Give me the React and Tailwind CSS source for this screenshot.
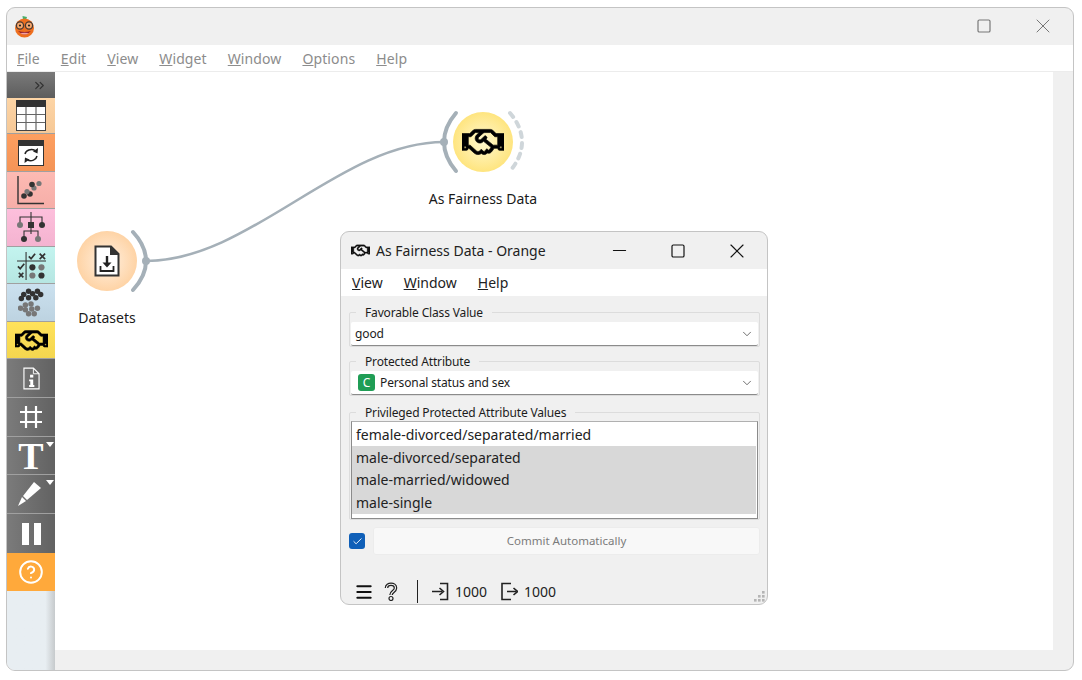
import { ChevronDown, ChevronsRight, Check, CircleHelp, Menu, Minus, Square, X } from "lucide-react";
import { FaRegHandshake } from "react-icons/fa";

const font = { fontFamily: '"Noto Sans", "Open Sans", sans-serif' };

function Logo() {
  return (
    <svg width="24" height="24" viewBox="0 0 24 24">
      <path d="M10.5 2 L15 3 L14 6 L11 6 Z" fill="#46b06a" />
      <circle cx="12.5" cy="14" r="9.5" fill="#ee6f1f" />
      <path d="M6 17 Q12.5 24 19 17 Q12.5 19 6 17 Z" fill="#8f1d2a" />
      <path d="M8 19 Q12.5 22 17 19 Q12.5 18.5 8 19 Z" fill="#f4a0a0" />
      <circle cx="8" cy="11.5" r="3.6" fill="#f6a66a" stroke="#4a3a32" strokeWidth="1.3" />
      <circle cx="17" cy="11.5" r="3.6" fill="#f6a66a" stroke="#4a3a32" strokeWidth="1.3" />
      <circle cx="8" cy="11.5" r="1.1" fill="#222" />
      <circle cx="17" cy="11.5" r="1.1" fill="#222" />
    </svg>
  );
}

function TableIcon() {
  return (
    <svg width="30" height="31" viewBox="0 0 30 31">
      <rect x="0.5" y="0.5" width="29" height="30" fill="#fff" stroke="#444" />
      <rect x="0" y="0" width="30" height="7" fill="#333" />
      <path d="M10 7V30M20 7V30M1 14.5H29M1 22.5H29" stroke="#666" strokeWidth="1.2" />
    </svg>
  );
}

function ReloadIcon() {
  return (
    <svg width="26" height="26" viewBox="0 0 26 26">
      <rect x="0.5" y="0.5" width="25" height="25" fill="#fff" stroke="#333" />
      <rect x="0" y="0" width="26" height="6" fill="#333" />
      <path d="M7 14 A6.5 5.5 0 0 1 17 10.5" fill="none" stroke="#222" strokeWidth="1.5" />
      <path d="M20 8 L19.5 13.5 L15 11.5 Z" fill="#222" />
      <path d="M19 16 A6.5 5.5 0 0 1 9.5 20" fill="none" stroke="#222" strokeWidth="1.5" />
      <path d="M6.5 23 L7 17.5 L11.5 19.5 Z" fill="#222" />
    </svg>
  );
}

function ScatterIcon() {
  return (
    <svg width="28" height="29" viewBox="0 0 28 29">
      <path d="M1 0V27.5H27" fill="none" stroke="#333" strokeWidth="1.4" />
      <circle cx="7" cy="20" r="2.8" fill="#333" />
      <circle cx="13" cy="18" r="2.8" fill="#333" />
      <circle cx="10" cy="15.5" r="2.6" fill="#777" />
      <circle cx="17" cy="12" r="2.6" fill="#777" />
      <circle cx="15" cy="8.5" r="2.8" fill="#333" />
      <circle cx="22" cy="7.5" r="2.6" fill="#777" />
    </svg>
  );
}

function TreeIcon() {
  return (
    <svg width="30" height="31" viewBox="0 0 30 31">
      <path d="M15 0V13M4 13V5H26V13M15 13V22M8 26V19H22V26" fill="none" stroke="#333" strokeWidth="1.1" />
      <circle cx="4" cy="13" r="3" fill="#777" />
      <rect x="12" y="10" width="6" height="6" fill="#333" />
      <circle cx="26" cy="13" r="3" fill="#333" />
      <circle cx="8" cy="27" r="3" fill="#333" />
      <circle cx="22" cy="27" r="3" fill="#777" />
    </svg>
  );
}

function TestIcon() {
  return (
    <svg width="29" height="29" viewBox="0 0 32 32">
      <path d="M10 1V32M0 11H32" stroke="#333" strokeWidth="1.2" />
      <path d="M13 6L15.5 8.5L20 3M1 17L3.5 19.5L8 14" fill="none" stroke="#333" strokeWidth="1.9" />
      <path d="M25 3L31 9M31 3L25 9M2 24L7 29M7 24L2 29" stroke="#333" strokeWidth="1.9" />
      <circle cx="17" cy="18" r="3.4" fill="#333" />
      <circle cx="27" cy="18" r="3.4" fill="#777" />
      <circle cx="17" cy="27" r="3.4" fill="#777" />
      <circle cx="27" cy="27" r="3.4" fill="#333" />
    </svg>
  );
}

function ClusterIcon() {
  const dark = [[13, 4], [18, 7], [7, 8], [24, 4], [13, 12], [28, 8], [22, 12], [4, 13]];
  const gray = [[3, 25], [9, 21], [16, 20], [24, 25], [9, 27], [17, 26], [13, 32], [20, 32]];
  return (
    <svg width="26" height="29" viewBox="0 0 32 36">
      {gray.map(([x, y], i) => <circle key={i} cx={x} cy={y} r="3.4" fill="#777" />)}
      {dark.map(([x, y], i) => <circle key={i} cx={x} cy={y} r="3.4" fill="#333" />)}
    </svg>
  );
}

function InfoIcon() {
  return (
    <svg width="17" height="23" viewBox="0 0 18 24">
      <path d="M1 1H11L17 7V23H1Z" fill="none" stroke="#fff" strokeWidth="1.2" />
      <path d="M11 1V7H17" fill="none" stroke="#fff" strokeWidth="1" />
      <rect x="7.5" y="8" width="3.4" height="3" fill="#fff" />
      <path d="M6.5 13H10.8V19H12V21H6.5V19H7.7V15H6.5Z" fill="#fff" />
    </svg>
  );
}

function HashIcon() {
  return (
    <svg width="24" height="24" viewBox="0 0 24 24">
      <path d="M7 1V23M17 1V23M1 7H23M1 17H23" stroke="#fff" strokeWidth="2.2" />
    </svg>
  );
}

function PenIcon() {
  return (
    <svg width="24" height="26" viewBox="0 0 24 26">
      <path d="M16 1L23 7L9 19L5 15Z" fill="#fff" />
      <path d="M4 16L8 20L0 25Z" fill="#fff" />
    </svg>
  );
}

function HelpOutlineIcon() {
  const d = "M2.5 6 C2.5 1 11.5 1 11.5 6 C11.5 9.5 7 9.5 7 13";
  return (
    <svg width="14" height="19" viewBox="0 0 14 19">
      <path d={d} fill="none" stroke="#222" strokeWidth="3.6" />
      <path d={d} fill="none" stroke="#f0f0f0" strokeWidth="1.2" />
      <circle cx="7" cy="16.5" r="2" fill="none" stroke="#222" strokeWidth="1.2" />
    </svg>
  );
}

function InputIcon() {
  return (
    <svg width="17" height="19" viewBox="0 0 17 19" className="shrink-0">
      <path d="M8 1.5H15.5V17.5H8" fill="none" stroke="#222" strokeWidth="1.6" />
      <path d="M0 9.5H10" stroke="#222" strokeWidth="1.6" />
      <path d="M7.5 6L11.5 9.5L7.5 13" fill="none" stroke="#222" strokeWidth="1.6" />
    </svg>
  );
}

function OutputIcon() {
  return (
    <svg width="17" height="19" viewBox="0 0 17 19" className="shrink-0">
      <path d="M10 1.5H1V17.5H10" fill="none" stroke="#222" strokeWidth="1.6" />
      <path d="M6 9.5H15.5" stroke="#222" strokeWidth="1.6" />
      <path d="M12.5 6L16.5 9.5L12.5 13" fill="none" stroke="#222" strokeWidth="1.6" />
    </svg>
  );
}

function Corner() {
  return <div className="absolute right-[1px] top-[5px] w-0 h-0 border-l-[4px] border-r-[4px] border-t-[5px] border-l-transparent border-r-transparent border-t-white" />;
}

function Tool({ color, height = "h-[38px]", children }) {
  return (
    <div className={`relative ${height} flex items-center justify-center border-b border-[#a0a0a0] ${color}`}>
      {children}
    </div>
  );
}

const grayRow = "bg-linear-to-r from-[#7b7b7b] to-[#626262]";

function Sidebar() {
  return (
    <div className="w-[48px] shrink-0 flex flex-col bg-linear-to-r from-[#e8eef2] from-80% to-[#c6cacc]">
      <div className="h-[26px] flex items-center justify-end pr-[8px] bg-linear-to-b from-[#7a7a7a] to-[#5d5d5d]">
        <ChevronsRight size={15} strokeWidth={2} className="text-[#333]" />
      </div>
      <Tool height="h-[36px]" color="bg-linear-to-b from-[#fdd5a6] to-[#f6c896]"><TableIcon /></Tool>
      <Tool color="bg-linear-to-b from-[#fd9f60] to-[#f49457]"><ReloadIcon /></Tool>
      <Tool height="h-[37px]" color="bg-linear-to-b from-[#fdbab3] to-[#f6aea8]"><ScatterIcon /></Tool>
      <Tool color="bg-linear-to-b from-[#fdbfdc] to-[#f4b3d0]"><TreeIcon /></Tool>
      <Tool height="h-[37px]" color="bg-linear-to-b from-[#c3f4ef] to-[#b6e6e2]"><TestIcon /></Tool>
      <Tool color="bg-linear-to-b from-[#cbe1ef] to-[#bdd3e1]"><ClusterIcon /></Tool>
      <Tool height="h-[37px]" color="bg-linear-to-b from-[#ffe25a] to-[#f4d64f]">
        <FaRegHandshake size={33} stroke="#000" strokeWidth={10} className="text-black" />
      </Tool>
      <Tool height="h-[39px]" color={grayRow}><InfoIcon /></Tool>
      <Tool height="h-[39px]" color={grayRow}><HashIcon /></Tool>
      <Tool color={grayRow}>
        <span className="text-[38px] leading-none font-bold text-white" style={{ fontFamily: '"Liberation Serif", serif' }}>T</span>
        <Corner />
      </Tool>
      <Tool height="h-[39px]" color={grayRow}>
        <div className="pr-[2px]"><PenIcon /></div>
        <Corner />
      </Tool>
      <div className={`h-[39px] flex items-center justify-center ${grayRow}`}>
        <div className="flex gap-[5px]">
          <div className="w-[7px] h-[22px] bg-white" />
          <div className="w-[7px] h-[22px] bg-white" />
        </div>
      </div>
      <div className="h-[38px] flex items-center justify-center bg-[#ffa93b]">
        <CircleHelp size={26} strokeWidth={1.8} className="text-white" />
      </div>
    </div>
  );
}

function Connections() {
  return (
    <svg className="absolute inset-0" width="998" height="578">
      <path d="M91 189 C 195 189, 285 70, 389 70" fill="none" stroke="#a5b0b8" strokeWidth="2.6" />
    </svg>
  );
}

function Node({ x, y, name, from, to, inGate, outGate, children }) {
  return (
    <div className="absolute w-[120px] flex flex-col items-center" style={{ left: x, top: y }}>
      <div className="relative w-[120px] h-[74px] flex items-center justify-center">
        <svg className="absolute inset-0" width="120" height="74" viewBox="0 0 120 74">
          {inGate && (
            <g>
              <path d="M33 8 Q21 22 21 37 Q21 52 33 66" fill="none" stroke="#a5b0b8" strokeWidth="4" strokeLinecap="round" />
              <circle cx="21" cy="37" r="4" fill="#a5b0b8" />
            </g>
          )}
          {outGate && (
            <g>
              <path d="M86 8 Q99 22 99 37 Q99 52 86 66" fill="none" stroke="#a5b0b8" strokeWidth="4" strokeLinecap="round" />
              <circle cx="99" cy="37" r="4" fill="#a5b0b8" />
            </g>
          )}
          {inGate && (
            <path d="M87 8 Q99 22 99 37 Q99 52 87 66" fill="none" stroke="#cfd6da" strokeWidth="4" strokeLinecap="round" strokeDasharray="5 6" />
          )}
        </svg>
        <div className={`relative w-[60px] h-[60px] rounded-full flex items-center justify-center bg-radial ${from} ${to}`}>
          {children}
        </div>
      </div>
      <div className="mt-[10px] text-[14px] leading-[20px] text-[#1a1a1a] whitespace-nowrap">{name}</div>
    </div>
  );
}

function DatasetIcon() {
  return (
    <svg width="26" height="32" viewBox="0 0 26 32">
      <path d="M1.5 1.5H17L24.5 9V30.5H1.5Z" fill="#fff" stroke="#333" strokeWidth="2" />
      <path d="M16 1L25 10H16Z" fill="#333" />
      <path d="M13 11V20" stroke="#222" strokeWidth="2.4" />
      <path d="M8.5 17.5L13 22.5L17.5 17.5Z" fill="#222" />
      <path d="M6.5 21V26H19.5V21" fill="none" stroke="#222" strokeWidth="1.8" />
    </svg>
  );
}

function GroupBox({ title, className, children }) {
  return (
    <fieldset className={`border border-[#dcdcdc] rounded-[2px] pl-[1px] pr-[1px] ${className}`}>
      <legend className="ml-[5px] px-[9px] text-[12px] leading-[17px] tracking-[-0.15px] text-[#1c1c1c]">{title}</legend>
      {children}
    </fieldset>
  );
}

function Combo({ children }) {
  return (
    <div className="h-[24px] flex items-center justify-between bg-white border-b border-[#8b8b8b] rounded-[2px] pl-[4px] pr-[4px] text-[12px] tracking-[-0.13px] text-[#1c1c1c]">
      <div className="flex items-center">{children}</div>
      <ChevronDown size={14} strokeWidth={1.2} className="text-[#333]" />
    </div>
  );
}

function ListRow({ children, selected }) {
  return (
    <div className={`h-[22.5px] flex items-center pl-[4px] text-[14px] text-[#222] ${selected ? "bg-[#d8d8d8]" : "bg-white"}`}>
      {children}
    </div>
  );
}

function SizeGrip() {
  const dots = [[9, 1], [5, 5], [9, 5], [1, 9], [5, 9], [9, 9]];
  return (
    <div className="absolute right-[2px] bottom-[2px] w-[12px] h-[12px]">
      <svg width="12" height="12" viewBox="0 0 12 12">
        {dots.map(([x, y], i) => <rect key={i} x={x} y={y} width="2.6" height="2.6" fill="#b5b5b5" />)}
      </svg>
    </div>
  );
}

function Dialog() {
  return (
    <div className="absolute left-[285px] top-[159px] w-[428px] h-[374px] bg-[#f0f0f0] border border-[#c4c4c4] rounded-[9px] overflow-hidden flex flex-col">
      <div className="h-[37px] shrink-0 flex items-center pl-[10px]">
        <FaRegHandshake size={19} stroke="#111" strokeWidth={10} className="text-[#111]" />
        <span className="ml-[6px] text-[14px] text-[#222]">As Fairness Data - Orange</span>
        <div className="ml-auto flex items-center">
          <div className="w-[60px] flex justify-center"><Minus size={21} strokeWidth={1.2} className="text-[#111]" /></div>
          <div className="w-[58px] flex justify-center"><Square size={16} strokeWidth={1.8} className="text-[#111]" /></div>
          <div className="w-[60px] flex justify-center"><X size={24} strokeWidth={1.1} className="text-[#111]" /></div>
        </div>
      </div>
      <div className="h-[27px] shrink-0 flex items-center gap-[21px] bg-white pl-[11px] text-[14px] text-[#222]">
        <span><u>V</u>iew</span>
        <span><u>W</u>indow</span>
        <span><u>H</u>elp</span>
      </div>
      <div className="flex-1 flex flex-col pl-[8px] pr-[7px] pt-[8px]">
        <GroupBox title="Favorable Class Value">
          <div className="pt-[1px]">
            <Combo>good</Combo>
          </div>
        </GroupBox>
        <GroupBox title="Protected Attribute" className="mt-[6px]">
          <div className="pt-[1px]">
            <Combo>
              <span className="ml-[3px] w-[17px] h-[17px] rounded-[3px] bg-[#1f9d55] text-white text-[12px] leading-[17px] text-center mr-[5px]">C</span>
              Personal status and sex
            </Combo>
          </div>
        </GroupBox>
        <GroupBox title="Privileged Protected Attribute Values" className="mt-[8px]">
          <div className="h-[98px] bg-white border border-[#8b8b8b] border-t-[#b0b0b0] pt-[1.5px] pr-[1px]">
            <ListRow>female-divorced/separated/married</ListRow>
            <ListRow selected>male-divorced/separated</ListRow>
            <ListRow selected>male-married/widowed</ListRow>
            <ListRow selected>male-single</ListRow>
          </div>
        </GroupBox>
        <div className="mt-[7px] flex items-center">
          <div className="w-[16px] h-[16px] rounded-[3px] bg-[#0f5fb8] flex items-center justify-center">
            <Check size={11} strokeWidth={2} className="text-white" />
          </div>
          <div className="ml-[8px] flex-1 h-[28px] flex items-center justify-center bg-[#f8f8f8] border border-[#ececec] rounded-[3px] text-[11.5px] text-[#7b7b7b]">
            Commit Automatically
          </div>
        </div>
        <div className="mt-[25px] flex items-center text-[14px] text-[#222]">
          <Menu size={20} strokeWidth={2.4} className="ml-[5px] text-[#111]" />
          <div className="ml-[10px] w-[14px] flex"><HelpOutlineIcon /></div>
          <div className="ml-[19px] w-px h-[23px] bg-[#222]" />
          <div className="ml-[14px] flex"><InputIcon /></div>
          <span className="ml-[6px]">1000</span>
          <div className="ml-[14px] flex"><OutputIcon /></div>
          <span className="ml-[6px]">1000</span>
        </div>
      </div>
      <SizeGrip />
    </div>
  );
}

export default function App() {
  return (
    <div className="w-[1082px] h-[680px] bg-white pt-[7px] pl-[6px]" style={font}>
      <div className="w-[1068px] h-[664px] border border-[#c4c4c4] rounded-[9px] overflow-hidden flex flex-col bg-[#f0f0f0]">
        <div className="h-[37px] shrink-0 flex items-center pl-[5px] pb-[1px]">
          <Logo />
          <div className="ml-auto flex items-center">
            <div className="w-[60px] flex justify-center pl-[1px]"><Square size={16} strokeWidth={1.8} className="text-[#777]" /></div>
            <div className="w-[60px] flex justify-center"><X size={24} strokeWidth={1} className="text-[#777]" /></div>
          </div>
        </div>
        <div className="h-[27px] shrink-0 flex items-center gap-[21px] bg-white border-b border-[#ececec] pl-[10px] text-[14px] tracking-[0.1px] text-[#8c8c8c]">
          <span><u>F</u>ile</span>
          <span><u>E</u>dit</span>
          <span><u>V</u>iew</span>
          <span><u>W</u>idget</span>
          <span><u>W</u>indow</span>
          <span><u>O</u>ptions</span>
          <span><u>H</u>elp</span>
        </div>
        <div className="flex-1 flex min-h-0">
          <Sidebar />
          <div className="flex-1 flex flex-col">
            <div className="relative h-[578px] bg-white">
              <Connections />
              <Node x={-8} y={152} name="Datasets" from="from-[#fff0e0]" to="to-[#fdc78c]" outGate>
                <DatasetIcon />
              </Node>
              <Node x={368} y={33} name="As Fairness Data" from="from-[#fff8cc]" to="to-[#fedc55]" inGate>
                <FaRegHandshake size={42} stroke="#000" strokeWidth={10} className="text-black" />
              </Node>
              <Dialog />
            </div>
          </div>
          <div className="w-[20px] shrink-0" />
        </div>
      </div>
    </div>
  );
}
